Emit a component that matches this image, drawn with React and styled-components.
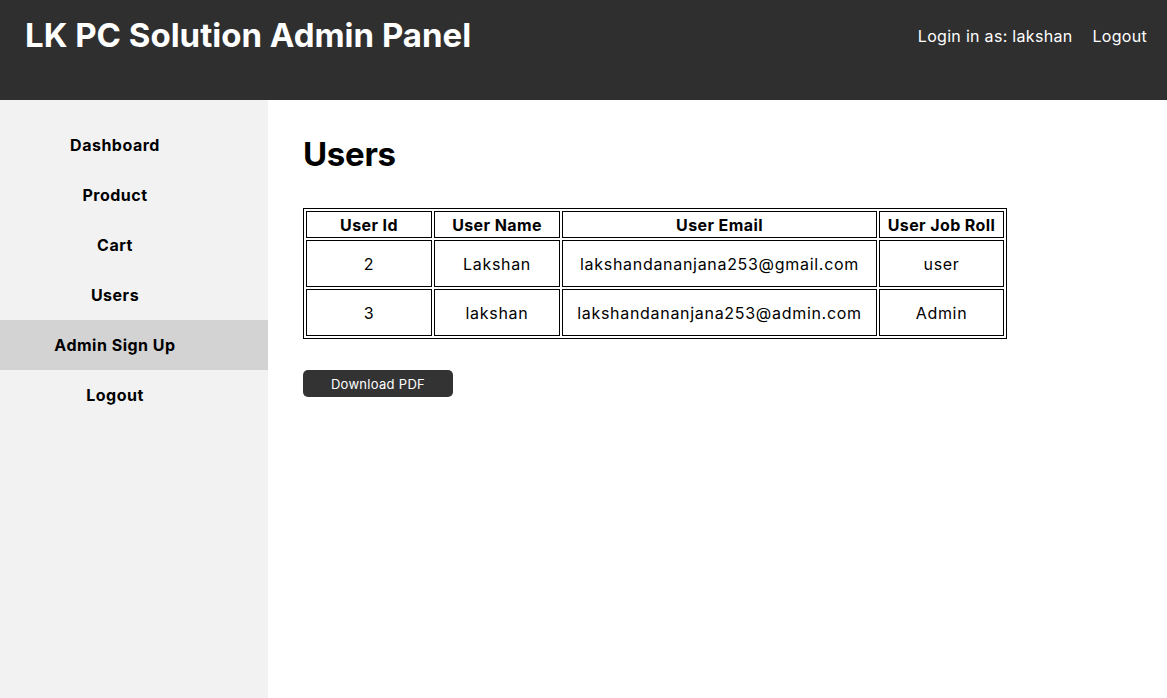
import React from "react";
import styled, { createGlobalStyle } from "styled-components";

const Global = createGlobalStyle`
  * { box-sizing: border-box; }
  html, body { margin: 0; padding: 0; background: #fff; }
  body { font-family: Inter, "Noto Sans", sans-serif; color: #000; }
`;

const Page = styled.div`
  display: flex;
  flex-direction: column;
  min-height: 698px;
`;

const Header = styled.header`
  height: 100px;
  background: #2f2f2f;
  color: #fff;
  display: flex;
  justify-content: space-between;
  align-items: flex-start;
  padding: 13px 20px 0 25px;
`;

const Title = styled.h1`
  margin: 0;
  font-size: 33px;
  font-weight: 700;
  letter-spacing: 0px;
  line-height: 44px;
`;

const UserBar = styled.div`
  display: flex;
  gap: 20px;
  font-size: 16px;
  line-height: 44px;
  letter-spacing: 0.3px;
  padding-top: 1px;
`;

const Body = styled.div`
  flex: 1;
  display: flex;
`;

const Sidebar = styled.nav`
  width: 268px;
  background: #f2f2f2;
  padding-top: 20px;
  display: flex;
  flex-direction: column;
`;

const NavItem = styled.div`
  height: 50px;
  display: flex;
  align-items: center;
  justify-content: center;
  font-size: 16px;
  font-weight: 700;
  letter-spacing: 0.5px;
  padding-right: 38px;
  background: ${(p) => (p.$active ? "#d3d3d3" : "transparent")};
`;

const Main = styled.main`
  flex: 1;
  padding: 28px 35px;
`;

const Heading = styled.h2`
  margin: 0 0 28px;
  font-size: 33px;
  font-weight: 700;
  letter-spacing: -0.3px;
  line-height: 52px;
`;

const Table = styled.table`
  border: 1px solid #000;
  border-spacing: 2px;
  font-size: 16px;
`;

const Th = styled.th`
  border: 1px solid #000;
  padding: 0 1px;
  height: 27px;
  font-weight: 700;
  letter-spacing: 0.4px;
  text-align: center;
  width: ${(p) => p.$w}px;
`;

const Td = styled.td`
  border: 1px solid #000;
  padding: 0 10px;
  height: 47px;
  letter-spacing: 0.7px;
  text-align: center;
`;

const Button = styled.button`
  margin-top: 31px;
  width: 150px;
  height: 27px;
  background: #333;
  color: #fff;
  border: none;
  border-radius: 5px;
  font-family: Inter, sans-serif;
  font-size: 13px;
  letter-spacing: 0.3px;
  display: block;
`;

const rows = [
  { id: 2, name: "Lakshan", email: "lakshandananjana253@gmail.com", role: "user" },
  { id: 3, name: "lakshan", email: "lakshandananjana253@admin.com", role: "Admin" },
];

export default function App() {
  return (
    <Page>
      <Global />
      <Header>
        <Title>LK PC Solution Admin Panel</Title>
        <UserBar>
          <span>Login in as: lakshan</span>
          <span>Logout</span>
        </UserBar>
      </Header>
      <Body>
        <Sidebar>
          <NavItem>Dashboard</NavItem>
          <NavItem>Product</NavItem>
          <NavItem>Cart</NavItem>
          <NavItem>Users</NavItem>
          <NavItem $active>Admin Sign Up</NavItem>
          <NavItem>Logout</NavItem>
        </Sidebar>
        <Main>
          <Heading>Users</Heading>
          <Table>
            <thead>
              <tr>
                <Th $w={126}>User Id</Th>
                <Th $w={126}>User Name</Th>
                <Th $w={315}>User Email</Th>
                <Th $w={125}>User Job Roll</Th>
              </tr>
            </thead>
            <tbody>
              {rows.map((r) => (
                <tr key={r.id}>
                  <Td>{r.id}</Td>
                  <Td>{r.name}</Td>
                  <Td>{r.email}</Td>
                  <Td>{r.role}</Td>
                </tr>
              ))}
            </tbody>
          </Table>
          <Button>Download PDF</Button>
        </Main>
      </Body>
    </Page>
  );
}
